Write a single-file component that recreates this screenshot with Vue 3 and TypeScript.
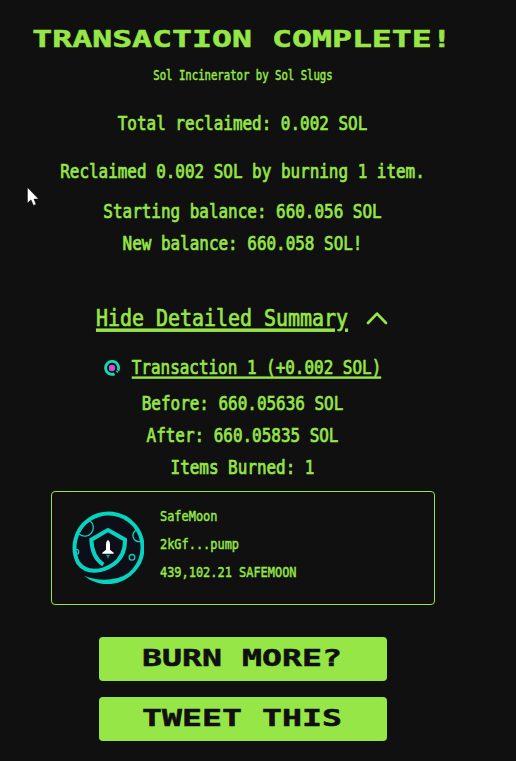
<script setup lang="ts">
interface Token {
  name: string
  address: string
  amount: string
}

const summary: string[] = [
  'Total reclaimed: 0.002 SOL',
  'Reclaimed 0.002 SOL by burning 1 item.',
  'Starting balance: 660.056 SOL',
  'New balance: 660.058 SOL!',
]
const details: string[] = ['Before: 660.05636 SOL', 'After: 660.05835 SOL', 'Items Burned: 1']
const token: Token = { name: 'SafeMoon', address: '2kGf...pump', amount: '439,102.21 SAFEMOON' }
const actions: string[] = ['BURN MORE?', 'TWEET THIS']
</script>

<template>
  <main class="page">
    <h1 class="title"><span class="wide">TRANSACTION COMPLETE!</span></h1>
    <p class="byline"><span class="tall">Sol Incinerator by Sol Slugs</span></p>

    <section class="totals">
      <p v-for="line in summary" :key="line" class="line"><span class="tall">{{ line }}</span></p>
    </section>

    <div class="toggle">
      <span class="tall">Hide Detailed Summary</span>
      <svg class="chevron" width="22" height="14" viewBox="0 0 22 14">
        <path d="M2 12 L11 2.6 L20 12" fill="none" stroke="#96e648" stroke-width="2.7" stroke-linecap="round" stroke-linejoin="round" />
      </svg>
    </div>

    <div class="tx">
      <svg width="16" height="16" viewBox="0 0 16 16">
        <path d="M10.6 13.9 A6.5 6.5 0 1 1 14 10.6" fill="none" stroke="#0ce0b0" stroke-width="2.8" />
        <path d="M11.6 10.4 L14.6 11.4 L13.2 13.2Z" fill="#0ce0b0" />
        <circle cx="8" cy="8" r="3.2" fill="#cf4ae8" />
      </svg>
      <span class="tall">Transaction 1 (+0.002 SOL)</span>
    </div>

    <section class="details">
      <p v-for="line in details" :key="line" class="line"><span class="tall">{{ line }}</span></p>
    </section>

    <article class="card">
      <svg class="logo" width="72" height="73" viewBox="24 21 216 219">
        <circle cx="132" cy="130" r="104" fill="#0e0e19" />
        <g fill="none" stroke="#07d4c0">
          <path d="M46 91 A25 25 0 0 0 78 50" stroke-width="4" />
          <path d="M220 77 A18 18 0 0 0 230 112" stroke-width="4" />
          <path d="M34 136 Q44 135 44 144 Q44 151 36 151" stroke-width="4" />
          <circle cx="204" cy="160" r="8.5" stroke-width="4" />
          <path d="M118 182 Q84 160 82 107 L132 78 L183 107 Q184 157 148 181 C112 206 66 208 43 177 A102 102 0 1 1 210 198" stroke-width="12" />
        </g>
        <path d="M60 215 Q100 231 140 226 Q185 220 206 194 L215 201 A110 110 0 0 1 60 215Z" fill="#07d4c0" />
        <path d="M132 107 Q138 112 138 121 V137 L149 146 V149 H115 V146 L126 137 V121 Q126 112 132 107Z" fill="#fff" />
        <path d="M125 152 H139 L135 157 L132 165 L129 157Z" fill="#079b94" />
      </svg>
      <div class="token">
        <p><span class="tall">{{ token.name }}</span></p>
        <p><span class="tall">{{ token.address }}</span></p>
        <p><span class="tall">{{ token.amount }}</span></p>
      </div>
    </article>

    <div class="actions">
      <button v-for="label in actions" :key="label" type="button"><span class="wide">{{ label }}</span></button>
    </div>

    <svg class="cursor" width="12" height="19" viewBox="0 0 12 19">
      <path d="M.5 .5 V16 L4 12.8 L6.5 18.4 L9 17.2 L6.9 12 H11.5Z" fill="#fff" stroke="#050505" stroke-width=".4" />
    </svg>
  </main>
</template>

<style>
body {
  background: #101010;
}
</style>

<style scoped>
.page {
  position: relative;
  box-sizing: border-box;
  width: 486px;
  height: 761px;
  padding-top: 23px;
  display: flex;
  flex-direction: column;
  align-items: center;
  overflow: hidden;
  color: #96e648;
  font-family: 'DejaVu Sans Mono', monospace;
  font-size: 15.95px;
  white-space: nowrap;
}

h1,
p {
  margin: 0;
}

.tall {
  display: inline-block;
  transform: scaleY(1.2);
  -webkit-text-stroke: 0.6px currentColor;
}

.wide {
  display: inline-block;
  margin-right: 2px;
  transform: scaleY(0.7);
  -webkit-text-stroke: 0.7px currentColor;
}

.title {
  font-size: 33.2px;
  line-height: 32px;
  font-weight: 700;
}

.byline {
  margin-top: 9px;
  font-size: 10.65px;
  line-height: 24px;
}

.byline .tall {
  transform: scaleY(1.29);
  -webkit-text-stroke-width: 0.4px;
}

.totals {
  margin-top: 20px;
  text-align: center;
}

.line {
  line-height: 32px;
  text-align: center;
}

.line .tall {
  margin-right: 1px;
}

.totals .line:nth-child(2) {
  margin: 16px 0 8px;
}

.toggle {
  display: flex;
  align-items: center;
  gap: 18px;
  margin: 42px 2px 0 0;
  font-size: 19.95px;
  line-height: 32px;
}

.toggle .tall {
  transform: scaleY(1.16);
  text-decoration: underline;
  text-decoration-thickness: 2.6px;
  text-underline-offset: 2px;
}

.tx {
  display: flex;
  align-items: center;
  gap: 12px;
  margin: 18px 1px 0 0;
  line-height: 32px;
}

.tx .tall {
  text-decoration: underline;
  text-decoration-thickness: 1.7px;
  text-decoration-skip-ink: none;
  text-underline-offset: 2px;
}

.details {
  margin-top: 4px;
}

.card {
  box-sizing: border-box;
  display: flex;
  gap: 16px;
  width: 384px;
  height: 114px;
  margin-top: 7px;
  padding: 10px 20px;
  border: 1px solid #96e648;
  border-radius: 4px;
}

.logo {
  margin-top: 9px;
}

.token {
  font-size: 11.95px;
  line-height: 28px;
}

.token .tall {
  -webkit-text-stroke-width: 0.4px;
}

.actions {
  display: flex;
  flex-direction: column;
  gap: 16px;
  margin-top: 32px;
}

button {
  width: 288px;
  height: 44px;
  padding: 0 0 2px;
  border: 0;
  border-radius: 4px;
  background: #96e648;
  color: #101010;
  font: 700 33.2px / 42px 'DejaVu Sans Mono', monospace;
}

.cursor {
  position: absolute;
  left: 27px;
  top: 187px;
}
</style>
